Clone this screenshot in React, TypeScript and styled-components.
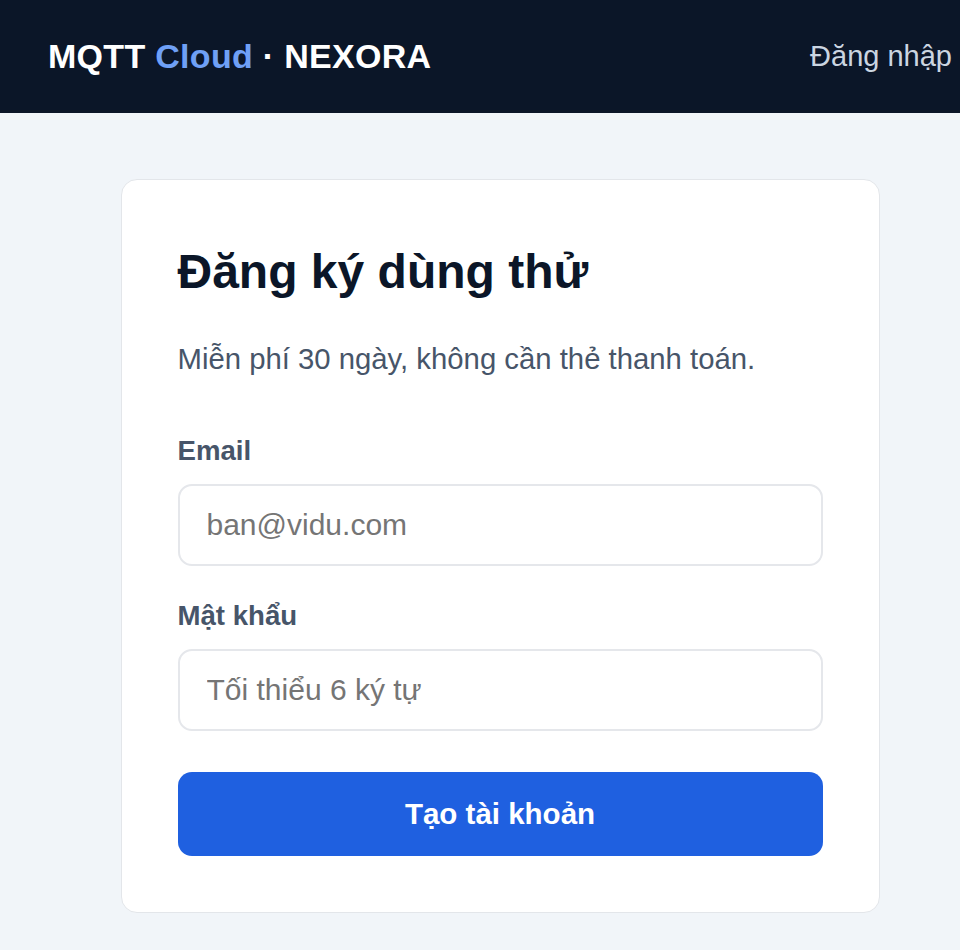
import React from "react";
import styled, { createGlobalStyle } from "styled-components";

const GlobalStyle = createGlobalStyle`
  html, body {
    margin: 0;
    padding: 0;
    overflow: hidden;
    background: #f1f5f9;
  }
  body {
    font-family: "Liberation Sans", Arial, Helvetica, sans-serif;
  }
  * { box-sizing: border-box; }
`;

const Page = styled.div`
  min-width: 1000px;
  width: 1000px;
  min-height: 950px;
  background: #f1f5f9;
`;

const Header = styled.header`
  height: 113px;
  background: #0b1628;
  padding: 0 48px;
  display: flex;
  align-items: center;
  justify-content: space-between;
`;

const Logo = styled.div`
  font-size: 34px;
  font-weight: 700;
  color: #ffffff;
  letter-spacing: 0.3px;
  white-space: nowrap;
`;

const Accent = styled.span`
  color: #6fa0f6;
`;

const NavLink = styled.a`
  font-size: 29px;
  color: #cbd5e1;
  text-decoration: none;
  white-space: nowrap;
`;

const Main = styled.main`
  padding: 66px 0 40px;
  display: flex;
  justify-content: center;
`;

const Card = styled.section`
  width: 759px;
  background: #ffffff;
  border: 1px solid #e3e6ea;
  border-radius: 16px;
  padding: 63px 56px 56px;
  display: flex;
  flex-direction: column;
`;

const Title = styled.h1`
  margin: 0;
  font-size: 48px;
  line-height: 58px;
  font-weight: 700;
  color: #0b1628;
`;

const Subtitle = styled.p`
  margin: 36px 0 0;
  font-size: 29.3px;
  line-height: 44px;
  color: #475569;
`;

const Form = styled.form`
  margin-top: 50px;
  display: flex;
  flex-direction: column;
`;

const Field = styled.div<{ $last?: boolean }>`
  display: flex;
  flex-direction: column;
  gap: 13px;
  margin-bottom: ${(p) => (p.$last ? "41px" : "30px")};
`;

const Label = styled.label`
  font-size: 27.6px;
  line-height: 40px;
  font-weight: 700;
  color: #475569;
`;

const Input = styled.input`
  height: 82px;
  width: 100%;
  border: 2px solid #e5e7eb;
  border-radius: 14px;
  padding: 0 27px;
  font-family: "Liberation Sans", Arial, Helvetica, sans-serif;
  font-size: 30px;
  color: #0b1628;
  background: #ffffff;
  outline: none;
  &::placeholder {
    color: #757575;
  }
`;

const Button = styled.button`
  height: 84px;
  width: 100%;
  border: none;
  border-radius: 14px;
  background: #1f60e0;
  color: #ffffff;
  font-family: "Liberation Sans", Arial, Helvetica, sans-serif;
  font-size: 29.5px;
  font-weight: 700;
  cursor: pointer;
`;

export default function App() {
  return (
    <>
      <GlobalStyle />
      <Page>
        <Header>
          <Logo>
            MQTT <Accent>Cloud</Accent> · NEXORA
          </Logo>
          <NavLink href="#">Đăng nhập</NavLink>
        </Header>
        <Main>
          <Card>
            <Title>Đăng ký dùng thử</Title>
            <Subtitle>Miễn phí 30 ngày, không cần thẻ thanh toán.</Subtitle>
            <Form onSubmit={(e) => e.preventDefault()}>
              <Field>
                <Label htmlFor="email">Email</Label>
                <Input id="email" type="email" placeholder="ban@vidu.com" />
              </Field>
              <Field $last>
                <Label htmlFor="password">Mật khẩu</Label>
                <Input id="password" type="password" placeholder="Tối thiểu 6 ký tự" />
              </Field>
              <Button type="submit">Tạo tài khoản</Button>
            </Form>
          </Card>
        </Main>
      </Page>
    </>
  );
}
